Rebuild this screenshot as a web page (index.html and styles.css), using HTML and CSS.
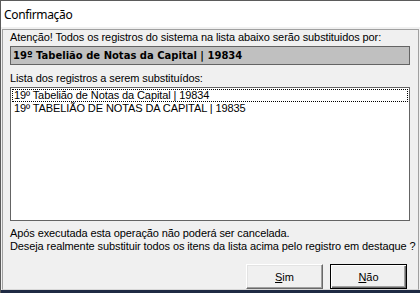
FILE: index.html
```html
<!DOCTYPE html>
<html lang="pt">
<head>
<meta charset="utf-8">
<link rel="stylesheet" href="styles.css">
</head>
<body>
<div class="window">
  <div class="titlebar">Confirmação</div>
  <div class="body">
    <div class="panel">
      <div class="label">Atenção! Todos os registros do sistema na lista abaixo serão substituidos por:</div>
      <div class="target">19º Tabelião de Notas da Capital | 19834</div>
      <div class="label label-list">Lista dos registros a serem substituídos:</div>
      <div class="listbox">
        <div class="item focused">19º Tabelião de Notas da Capital | 19834</div>
        <div class="item">19º TABELIÃO DE NOTAS DA CAPITAL | 19835</div>
      </div>
      <div class="message">
        <div class="label">Após executada esta operação não poderá ser cancelada.</div>
        <div class="label">Deseja realmente substituir todos os itens da lista acima pelo registro em destaque ?</div>
      </div>
      <div class="buttons">
        <button class="btn"><u>S</u>im</button>
        <button class="btn btn-default"><u>N</u>ão</button>
      </div>
    </div>
  </div>
  <div class="taskbar"></div>
</div>
</body>
</html>
```
FILE: styles.css
```css
html, body {
  margin: 0;
  padding: 0;
  background: #f0f0f0;
}
.window {
  width: 420px;
  height: 293px;
  box-sizing: border-box;
  border-top: 1px solid #5b5b5b;
  border-left: 1px solid #5b5b5b;
  background: #f0f0f0;
  display: flex;
  flex-direction: column;
  overflow: hidden;
  font-family: "Liberation Sans", Arial, sans-serif;
  font-size: 11px;
  letter-spacing: -0.1px;
  color: #000;
}
.titlebar {
  height: 26px;
  background: #fff;
  padding-left: 3px;
  display: flex;
  align-items: center;
  font-family: "Noto Sans", "Open Sans", sans-serif;
  font-size: 12px;
  letter-spacing: -0.35px;
  color: #000;
}
.body {
  flex: 1;
  min-width: 0;
  padding: 2px 1px 0 1px;
  display: flex;
  flex-direction: column;
}
.panel {
  flex: 1;
  min-width: 0;
  border-top: 1px solid #a0a0a0;
  border-left: 1px solid #a0a0a0;
  border-right: 1px solid #a0a0a0;
  border-bottom: 1px solid #d8d8d8;
  padding: 1px 8px 0 7px;
  display: flex;
  flex-direction: column;
}
.label {
  line-height: 13px;
  white-space: nowrap;
}
.target {
  margin-top: 2px;
  height: 17px;
  line-height: 17px;
  border: 1px solid #646464;
  background: #c0c0c0;
  font-family: "DejaVu Sans", Verdana, sans-serif;
  font-size: 10px;
  letter-spacing: 0;
  font-weight: bold;
  padding-left: 2px;
  white-space: nowrap;
}
.label-list {
  margin-top: 7px;
}
.listbox {
  margin-top: 2px;
  height: 130px;
  border: 1px solid #646464;
  background: #fff;
  padding: 1px;
}
.item {
  height: 13px;
  line-height: 13px;
  padding-left: 2px;
  color: #000;
  white-space: nowrap;
  box-sizing: border-box;
}
.item.focused {
  outline: 1px dotted #000;
  outline-offset: -1px;
}
.message {
  margin-top: 6px;
}
.buttons {
  margin-top: 11px;
  display: flex;
  justify-content: flex-end;
  gap: 7px;
  padding-right: 3px;
}
.btn {
  box-sizing: border-box;
  width: 77px;
  height: 25px;
  margin: 0;
  padding: 0;
  font-family: "Liberation Sans", Arial, sans-serif;
  font-size: 11px;
  color: #000;
  background: #f0f0f0;
  border: 1px solid;
  border-color: #fff #696969 #696969 #fff;
  box-shadow: inset -1px -1px 0 #a0a0a0, inset 1px 1px 0 #e3e3e3;
}
.btn-default {
  border: 1px solid #000;
  box-shadow: inset 1px 1px 0 #fff, inset -1px -1px 0 #696969, inset -2px -2px 0 #a0a0a0;
}
.taskbar {
  height: 3px;
  background: #1f2a44;
}
```
